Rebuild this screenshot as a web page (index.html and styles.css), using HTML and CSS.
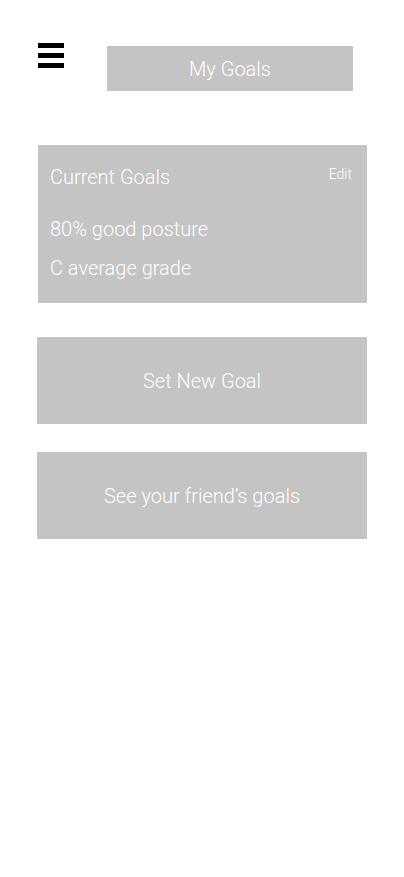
FILE: index.html
```html
<!DOCTYPE html>
<html lang="en">
<head>
    <meta charset="UTF-8">
    <meta name="viewport" content="width=device-width, initial-scale=1.0">
    <title>My Goals</title>
    <link rel="stylesheet" href="styles.css">
</head>
<body>
    <div class="header">
        <svg class="menu" width="26" height="25" viewBox="0 0 26 25">
            <rect x="0" y="0" width="26" height="5" fill="#000"/>
            <rect x="0" y="10" width="26" height="5" fill="#000"/>
            <rect x="0" y="20" width="26" height="5" fill="#000"/>
        </svg>
        <div class="title">My Goals</div>
    </div>

    <div class="goals-card">
        <div class="card-head">
            <span class="card-title">Current Goals</span>
            <span class="edit">Edit</span>
        </div>
        <div class="goal-list">
            <div class="goal">80% good posture</div>
            <div class="goal">C average grade</div>
        </div>
    </div>

    <div class="action first">Set New Goal</div>
    <div class="action second">See your friend’s goals</div>
</body>
</html>
```

FILE: styles.css
```css
body {
    margin: 0;
    font-family: Roboto, "Liberation Sans", sans-serif;
    font-weight: 300;
    background: #fff;
    color: #fff;
}
.header {
    display: flex;
    align-items: flex-start;
    padding: 43px 0 0 38px;
}
.menu {
    display: block;
}
.title {
    margin: 3px 0 0 43px;
    width: 246px;
    height: 45px;
    background: #c4c4c4;
    display: flex;
    align-items: center;
    justify-content: center;
    font-size: 20px;
    line-height: 24px;
}
.goals-card {
    box-sizing: border-box;
    margin: 54px 0 0 38px;
    width: 329px;
    height: 158px;
    padding: 20px 15px 0 12px;
    background: #c4c4c4;
}
.card-head {
    display: flex;
    justify-content: space-between;
    align-items: flex-start;
    margin-bottom: 28px;
}
.card-title {
    font-size: 20px;
    line-height: 24px;
}
.edit {
    font-size: 14px;
    line-height: 18px;
}
.goal-list {
    display: flex;
    flex-direction: column;
    gap: 15px;
}
.goal {
    font-size: 20px;
    line-height: 24px;
}
.action {
    margin-left: 37px;
    width: 330px;
    height: 87px;
    background: #c4c4c4;
    display: flex;
    align-items: center;
    justify-content: center;
    font-size: 20px;
    line-height: 24px;
}
.action.first {
    margin-top: 34px;
}
.action.second {
    margin-top: 28px;
}
```
